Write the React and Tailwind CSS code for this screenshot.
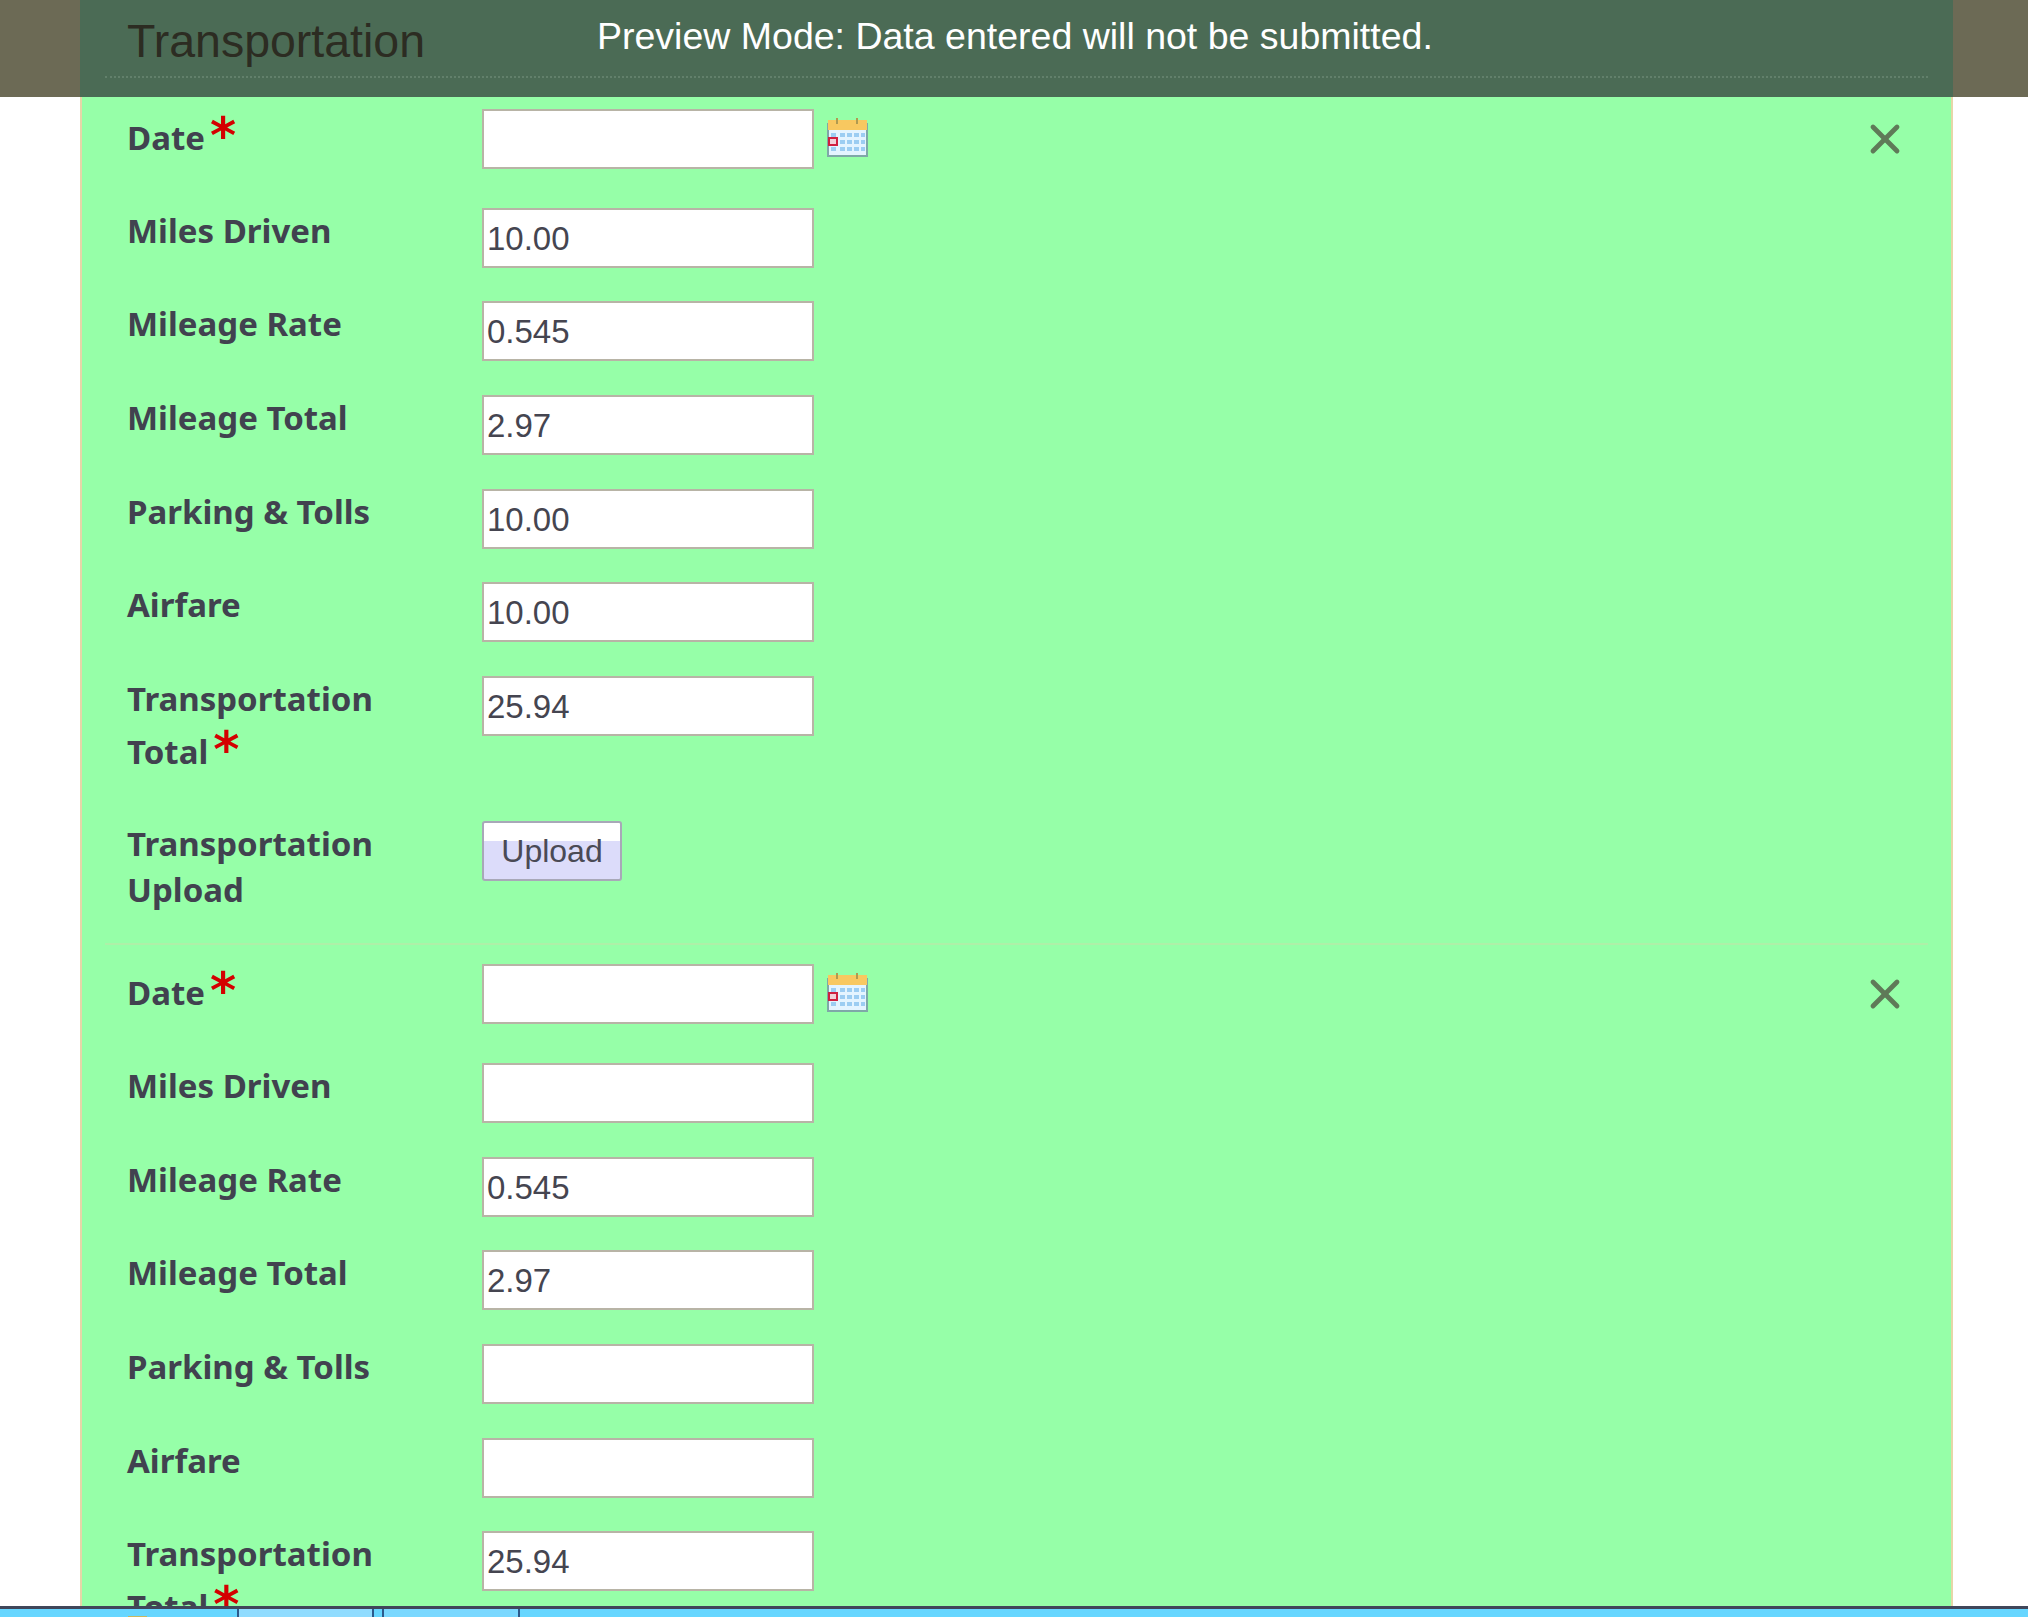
import React from "react";
import { X } from "lucide-react";

const labelFont = "font-['Noto_Sans',sans-serif]";
const inputFont = "font-['Liberation_Sans',Arial,sans-serif]";

const Star = () => (
  <span className="relative top-[3px] ml-[5px] font-['DejaVu_Sans',sans-serif] text-[50px] leading-[0] font-bold text-[#d40000]">
    *
  </span>
);

const CalendarIcon = () => (
  <svg width="41" height="39" viewBox="0 0 41 39" className="mt-[9px] ml-[13px] shrink-0">
    <rect x="1" y="6" width="39" height="32" fill="#e4f4ff" stroke="#7fa8a8" strokeWidth="2" />
    <rect x="1" y="2" width="39" height="10" fill="#f8c860" />
    <path d="M10 0v6M30 0v6" stroke="#b09a50" strokeWidth="2" />
    <g fill="#9ccdf2">
      <rect x="4" y="15" width="5" height="4" />
      <rect x="13" y="15" width="5" height="4" />
      <rect x="20" y="15" width="5" height="4" />
      <rect x="27" y="15" width="5" height="4" />
      <rect x="34" y="15" width="4" height="4" />
      <rect x="13" y="22" width="5" height="4" />
      <rect x="20" y="22" width="5" height="4" />
      <rect x="27" y="22" width="5" height="4" />
      <rect x="34" y="22" width="4" height="4" />
      <rect x="4" y="29" width="5" height="4" />
      <rect x="13" y="29" width="5" height="4" />
      <rect x="20" y="29" width="5" height="4" />
      <rect x="27" y="29" width="5" height="4" />
      <rect x="34" y="29" width="4" height="4" />
    </g>
    <rect x="2" y="20" width="8" height="7" fill="#f2d0d8" stroke="#d02040" strokeWidth="2" />
  </svg>
);

const Field = ({ value }) => (
  <input
    readOnly
    value={value}
    className={`${inputFont} block h-[60px] w-[332px] shrink-0 border-2 border-[#b8b4a6] bg-white px-[3px] pt-[2px] text-[33px] text-[#454550] outline-none`}
  />
);

const Row = ({ label, star, value, calendar, close, rowClass, labelClass }) => (
  <div className={`flex items-start ${rowClass}`}>
    <div className={`${labelFont} w-[355px] shrink-0 text-[33px] font-bold text-[#41424f] ${labelClass}`}>
      {label}
      {star && <Star />}
    </div>
    <Field value={value} />
    {calendar && <CalendarIcon />}
    {close && <X className="mt-[6px] ml-auto -mr-[3px] text-[#5f7a58]" size={48} strokeWidth={2.4} />}
  </div>
);

const ExpenseBlock = ({ miles, parking, airfare, blockClass, dateClass }) => (
  <div className={blockClass}>
    <Row label="Date" star calendar close value="" rowClass={dateClass} labelClass="pt-[4px] leading-[50px]" />
    <Row label="Miles Driven" value={miles} rowClass="h-[93.7px]" labelClass="leading-[46px]" />
    <Row label="Mileage Rate" value="0.545" rowClass="h-[93.7px]" labelClass="leading-[46px]" />
    <Row label="Mileage Total" value="2.97" rowClass="h-[93.7px]" labelClass="leading-[46px]" />
    <Row label="Parking & Tolls" value={parking} rowClass="h-[93.7px]" labelClass="leading-[46px]" />
    <Row label="Airfare" value={airfare} rowClass="h-[93.7px]" labelClass="leading-[46px]" />
    <Row
      label={
        <>
          Transportation
          <br />
          Total
        </>
      }
      star
      value="25.94"
      rowClass="h-[145.5px]"
      labelClass="-mt-[4px] leading-[53px]"
    />
  </div>
);

export default function App() {
  return (
    <div className="flex h-[1617px] flex-col overflow-hidden bg-white">
      <header className="shrink-0 bg-[#6c6a55] pr-[75px] pl-[80px]">
        <div className="flex h-[97px] flex-col bg-[#4b6b55] px-[25px]">
          <div className="flex h-[78px] items-center border-b-2 border-dotted border-[#62806b] px-[22px]">
            <h1 className={`${inputFont} mt-[6px] w-[470px] shrink-0 text-[46.5px] leading-none text-[#2c2c22]`}>
              Transportation
            </h1>
            <p className={`${inputFont} -mt-[3px] text-[37.5px] leading-none text-white`}>
              Preview Mode: Data entered will not be submitted.
            </p>
          </div>
        </div>
      </header>

      <main className="min-h-0 flex-1 overflow-hidden pr-[75px] pl-[80px]">
        <div className="border-x-2 border-[#e6d6a8] bg-[#96ffa8] px-[45px]">
          <ExpenseBlock miles="10.00" parking="10.00" airfare="10.00" blockClass="pt-[12px]" dateClass="h-[98.5px]" />
          <div className="flex h-[122px] items-start">
            <div className={`${labelFont} w-[355px] shrink-0 text-[33px] leading-[46px] font-bold text-[#41424f]`}>
              Transportation
              <br />
              Upload
            </div>
            <button
              className={`${inputFont} h-[60px] w-[140px] rounded-[3px] border-2 border-[#a8a8b8] bg-[linear-gradient(#ffffff_33%,#dcdcfa_33%)] text-[32px] text-[#4a4a55]`}
            >
              Upload
            </button>
          </div>
          <div className="-mx-[22px] h-[2px] bg-[#aef0a8]" />
          <ExpenseBlock miles="" parking="" airfare="" blockClass="pt-[18.5px]" dateClass="h-[99px]" />
        </div>
      </main>

      <footer className="flex h-[11px] shrink-0 border-t-[3px] border-[#40465a] bg-[#66d6ff] pl-[128px]">
        <div className="mt-auto h-[1px] w-[19px] bg-[#c8b860]" />
        <div className="ml-[90px] h-full w-[137px] border-x-2 border-[#2c5a8c] bg-[#90dcff]" />
        <div className="ml-[8px] h-full w-[138px] border-x-2 border-[#2c5a8c] bg-[#7ad8ff]" />
      </footer>
    </div>
  );
}
